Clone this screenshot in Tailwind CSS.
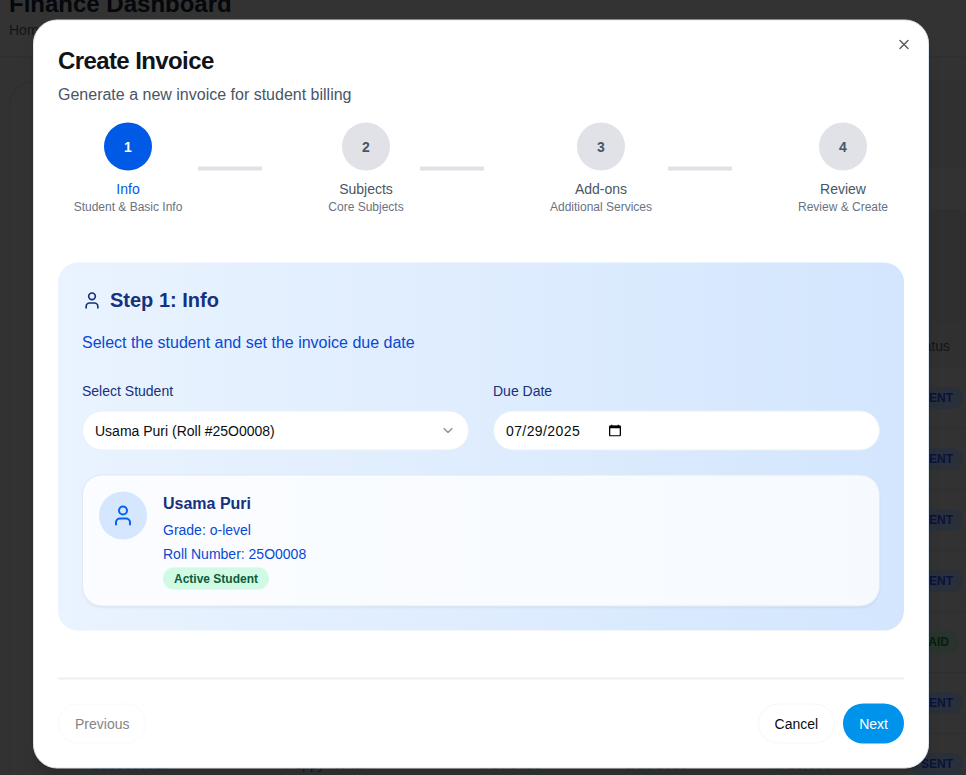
<!DOCTYPE html>
<html lang="en">
<head>
<meta charset="utf-8">
<title>Finance Dashboard</title>
<script src="https://cdn.jsdelivr.net/npm/@tailwindcss/browser@4"></script>
</head>
<body class="relative h-[775px] w-[966px] overflow-hidden bg-[#323232] font-['Liberation_Sans',Arial,sans-serif]">
  <!-- Dimmed dashboard behind the dialog -->
  <div class="flex h-full flex-col">
    <header class="h-[57px] shrink-0 border-b border-[#2f2f2f] bg-[#333333] pl-[9px]">
      <h1 class="-mt-[12px] text-[24px] leading-8 font-bold text-[#04070b]">Finance Dashboard</h1>
      <p class="text-sm leading-5 text-[#111519]">Home</p>
    </header>
    <section class="mt-[24px] ml-[9px] flex grow flex-col rounded-tl-3xl border-t border-l border-[#2f2f2f] pl-[30px]">
      <div class="h-[86px] shrink-0 bg-[#303030]"></div>
      <div class="mt-[41px] h-[114px] shrink-0 bg-[#2f2f2f]"></div>
      <div class="flex h-[45px] shrink-0 items-center justify-end bg-[#303030] pr-[16px] text-sm text-[#111519]">Status</div>
      <div class="flex h-[61px] shrink-0 items-center justify-end border-b border-[#2e2e2e] pr-[3px] text-xs font-bold text-[#07123e]"><span class="rounded-full bg-[#2a3039] px-[10px] py-[3px]">SENT</span></div>
      <div class="flex h-[61px] shrink-0 items-center justify-end border-b border-[#2e2e2e] pr-[3px] text-xs font-bold text-[#07123e]"><span class="rounded-full bg-[#2a3039] px-[10px] py-[3px]">SENT</span></div>
      <div class="flex h-[61px] shrink-0 items-center justify-end border-b border-[#2e2e2e] pr-[3px] text-xs font-bold text-[#07123e]"><span class="rounded-full bg-[#2a3039] px-[10px] py-[3px]">SENT</span></div>
      <div class="flex h-[61px] shrink-0 items-center justify-end border-b border-[#2e2e2e] pr-[3px] text-xs font-bold text-[#07123e]"><span class="rounded-full bg-[#2a3039] px-[10px] py-[3px]">SENT</span></div>
      <div class="flex h-[61px] shrink-0 items-center justify-end border-b border-[#2e2e2e] pr-[7px] text-xs font-bold text-[#03200f]"><span class="rounded-full bg-[#2a332d] px-[10px] py-[3px]">PAID</span></div>
      <div class="flex h-[61px] shrink-0 items-center justify-end border-b border-[#2e2e2e] pr-[3px] text-xs font-bold text-[#07123e]"><span class="rounded-full bg-[#2a3039] px-[10px] py-[3px]">SENT</span></div>
      <div class="flex h-[59px] shrink-0 items-center justify-end pr-[3px] text-sm text-[#15181c]">
        <span class="w-[193px] text-[#0b1f45]">2025000015</span><span class="w-[194px]">Puppy Rohan</span><span class="w-[146px]">8/18/2025</span><span class="w-[138px]">8/18/2025</span><span class="w-[148px]">Rs. 10,000</span><span class="rounded-full bg-[#2a3039] px-[10px] py-[3px] text-xs font-bold text-[#07123e]">SENT</span>
      </div>
    </section>
  </div>

  <!-- Create invoice dialog -->
  <main class="absolute top-[20px] left-[33px] flex h-[749px] w-[896px] -translate-y-[0.5px] flex-col rounded-3xl border border-[#dfe7ee] bg-white px-[24px] pt-[24px] shadow-lg">
    <button class="absolute top-[16px] right-[16px] text-[#555555]" aria-label="Close">
      <svg class="size-4" viewBox="0 0 24 24" fill="none" stroke="currentColor" stroke-width="2" stroke-linecap="round" stroke-linejoin="round"><path d="M18 6 6 18M6 6l12 12"/></svg>
    </button>
    <h2 class="h-8 text-2xl leading-8 font-bold tracking-[-0.6px] text-[#101318]"><span>Create Invoice</span></h2>
    <p class="mt-[6px] h-6 text-base leading-6 text-[#4a5565]">Generate a new invoice for student billing</p>

    <div class="mt-[16px] flex h-[92px] items-center justify-between px-[16px]">
      <div class="flex items-center gap-4">
        <div class="flex w-[108px] flex-col items-center">
          <div class="flex size-12 items-center justify-center rounded-full bg-[#005ae6] text-sm font-bold text-white">1</div>
          <div class="mt-2 text-sm leading-5 text-[#005ae6]">Info</div>
          <div class="text-xs leading-4 whitespace-nowrap text-[#6a7282]">Student &amp; Basic Info</div>
        </div>
        <div class="h-1 w-16 bg-[#e1e2e8]"></div>
      </div>
      <div class="flex items-center gap-4">
        <div class="flex w-[76px] flex-col items-center">
          <div class="flex size-12 items-center justify-center rounded-full bg-[#e1e2e8] text-sm font-bold text-[#4a5565]">2</div>
          <div class="mt-2 text-sm leading-5 text-[#4a5565]">Subjects</div>
          <div class="text-xs leading-4 whitespace-nowrap text-[#6a7282]">Core Subjects</div>
        </div>
        <div class="h-1 w-16 bg-[#e1e2e8]"></div>
      </div>
      <div class="flex items-center gap-4">
        <div class="flex w-[102px] flex-col items-center">
          <div class="flex size-12 items-center justify-center rounded-full bg-[#e1e2e8] text-sm font-bold text-[#4a5565]">3</div>
          <div class="mt-2 text-sm leading-5 text-[#4a5565]">Add-ons</div>
          <div class="text-xs leading-4 whitespace-nowrap text-[#6a7282]">Additional Services</div>
        </div>
        <div class="h-1 w-16 bg-[#e1e2e8]"></div>
      </div>
      <div class="flex w-[90px] flex-col items-center">
        <div class="flex size-12 items-center justify-center rounded-full bg-[#e1e2e8] text-sm font-bold text-[#4a5565]">4</div>
        <div class="mt-2 text-sm leading-5 text-[#4a5565]">Review</div>
        <div class="text-xs leading-4 whitespace-nowrap text-[#6a7282]">Review &amp; Create</div>
      </div>
    </div>

    <section class="mt-[48px] h-[368px] shrink-0 rounded-[20px] bg-linear-to-r from-[#eaf3ff] to-[#d3e6fd] px-6 pt-6">
      <h3 class="flex h-7 items-center gap-2 text-xl leading-[26px] font-bold text-[#15317f]">
        <svg class="size-5" viewBox="0 0 24 24" fill="none" stroke="currentColor" stroke-width="2" stroke-linecap="round" stroke-linejoin="round"><path d="M19 21v-2a4 4 0 0 0-4-4H9a4 4 0 0 0-4 4v2"/><circle cx="12" cy="7" r="4"/></svg>
        <span class="-mt-[3px]">Step 1: Info</span>
      </h3>
      <p class="mt-4 text-base leading-6 text-[#0849d4]">Select the student and set the invoice due date</p>
      <div class="mt-[26px] grid grid-cols-2 gap-x-6">
        <div>
          <div class="text-sm leading-5 text-[#15317f]">Select Student</div>
          <div class="mt-[10px] flex h-10 items-center justify-between rounded-[20px] border border-[#e9f1f8] bg-white px-3 text-sm text-[#0b0d10]">
            <span>Usama Puri (Roll #25O0008)</span>
            <svg class="size-4 text-[#888888]" viewBox="0 0 24 24" fill="none" stroke="currentColor" stroke-width="1.7" stroke-linecap="round" stroke-linejoin="round"><path d="m6 9 6 6 6-6"/></svg>
          </div>
        </div>
        <div>
          <div class="text-sm leading-5 text-[#15317f]">Due Date</div>
          <div class="mt-[10px] flex h-10 items-center rounded-[20px] border border-[#e9f1f8] bg-white px-3 text-sm text-[#0b0d10]">
            <span class="w-[103px] tracking-[0.4px]">07/29/2025</span>
            <svg class="-mt-px h-3 w-3" viewBox="0 0 12 12" fill="none" stroke="#000"><rect x=".65" y="1.6" width="10.7" height="9.8" rx=".8" stroke-width="1.3"/><path d="M.6 2.5h10.8" stroke-width="2.4"/><path d="M2.7 0v2M9.3 0v2" stroke-width="1.2"/></svg>
          </div>
        </div>
      </div>
      <div class="mt-6 flex h-[132px] gap-4 rounded-[20px] border border-[#dfeaf2] bg-white/80 p-4 shadow-xs">
        <div class="flex size-12 shrink-0 items-center justify-center rounded-full bg-[#d5e7fe] text-[#0762ee]">
          <svg class="size-6" viewBox="0 0 24 24" fill="none" stroke="currentColor" stroke-width="2" stroke-linecap="round" stroke-linejoin="round"><path d="M19 21v-2a4 4 0 0 0-4-4H9a4 4 0 0 0-4 4v2"/><circle cx="12" cy="7" r="4"/></svg>
        </div>
        <div class="flex flex-col items-start">
          <div class="text-base leading-6 font-bold text-[#15317f]">Usama Puri</div>
          <div class="mt-1 text-sm leading-5 text-[#0849d4]">Grade: o-level</div>
          <div class="mt-1 text-sm leading-5 text-[#0849d4]">Roll Number: 25O0008</div>
          <div class="mt-1 rounded-full bg-[#d0fae3] px-[11px] py-[3px] text-xs leading-4 font-bold text-[#0b5c3c]">Active Student</div>
        </div>
      </div>
    </section>

    <footer class="mt-[47px] flex h-[66px] items-end justify-between border-t-2 border-[#ebf0f5]">
      <button class="h-10 rounded-[20px] border border-[#fafafa] px-4 text-sm text-[#858585]">Previous</button>
      <div class="flex gap-2">
        <button class="h-10 rounded-[20px] border border-[#f7f7f8] px-4 text-sm text-[#0b0d10]">Cancel</button>
        <button class="h-10 rounded-[20px] bg-[#0093eb] px-4 text-sm text-white">Next</button>
      </div>
    </footer>
  </main>
</body>
</html>
